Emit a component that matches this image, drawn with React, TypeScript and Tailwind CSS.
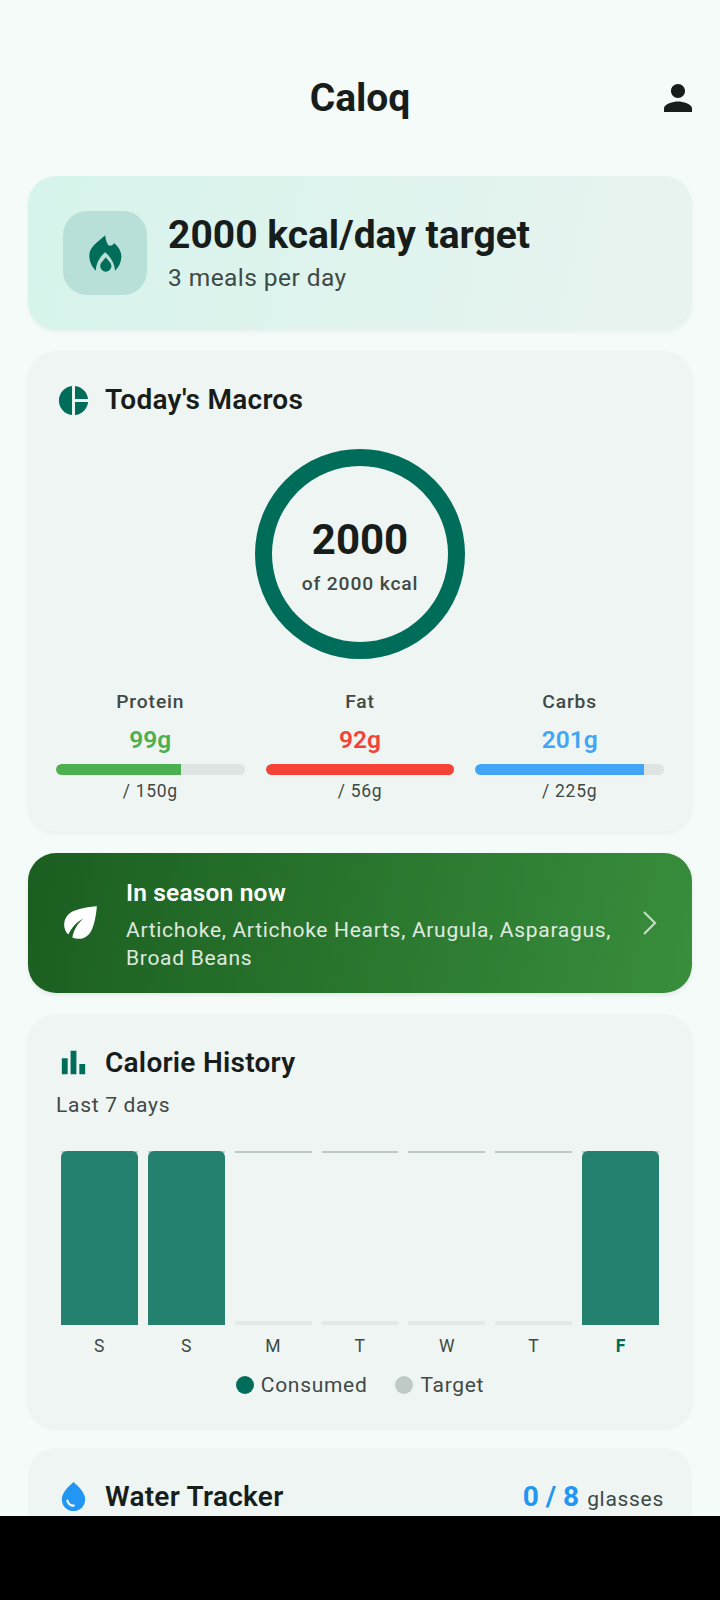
const macros = [
  { label: 'Protein', value: '99g', target: '/ 150g', pct: 66, color: 'text-[#4CAF50]', bar: 'bg-[#4CAF50]' },
  { label: 'Fat', value: '92g', target: '/ 56g', pct: 100, color: 'text-[#F44336]', bar: 'bg-[#F44336]' },
  { label: 'Carbs', value: '201g', target: '/ 225g', pct: 89.3, color: 'text-[#42A5F5]', bar: 'bg-[#42A5F5]' },
];

const days = [
  { label: 'S', full: true },
  { label: 'S', full: true },
  { label: 'M', full: false },
  { label: 'T', full: false },
  { label: 'W', full: false },
  { label: 'T', full: false },
  { label: 'F', full: true, today: true },
];

function MaterialIcon({ d, size, className }: { d: string; size: number; className: string }) {
  return (
    <svg viewBox="0 0 24 24" width={size} height={size} fill="currentColor" className={className}>
      <path d={d} />
    </svg>
  );
}

function CardTitle({ icon, title }: { icon: React.ReactNode; title: string }) {
  return (
    <div className="flex items-center gap-[14px] h-[42px]">
      {icon}
      <h2 className="text-[28px] leading-[42px] font-semibold tracking-[0.26px] text-[#171D1B]">{title}</h2>
    </div>
  );
}

export default function App() {
  return (
    <div className="w-[720px] h-[1600px] flex flex-col bg-[#F5FBF8] font-['Roboto',sans-serif] overflow-hidden">
      <div className="flex-1 min-h-0 overflow-hidden">
        <header className="mt-[70px] mb-[50px] h-[56px] px-[21px] grid grid-cols-[1fr_auto_1fr] items-center">
          <div />
          <h1 className="text-[39px] leading-[56px] font-bold text-[#171D1B]">Caloq</h1>
          <div className="flex justify-end">
            <MaterialIcon
              size={42}
              className="text-[#171D1B]"
              d="M12 12c2.21 0 4-1.79 4-4s-1.79-4-4-4-4 1.79-4 4 1.79 4 4 4zm0 2c-2.67 0-8 1.34-8 4v2h16v-2c0-2.66-5.33-4-8-4z"
            />
          </div>
        </header>

        <main className="px-[28px] flex flex-col gap-[21px]">
          {/* target */}
          <section className="h-[154px] px-[35px] flex items-center gap-[21px] rounded-[28px] bg-[linear-gradient(103deg,#D6F4EB,#E9F3F0)] shadow-[0_2px_4px_rgba(0,0,0,0.05)]">
            <div className="w-[84px] h-[84px] rounded-[24px] bg-[#B9E0D8] flex items-center justify-center">
              <svg viewBox="115 98 98 112" width="33" height="37" fill="#006D5B">
                <path d="M163 99C163 99 165 118 172 128C178 133 186 130 190 122C205 135 213 150 212 165C211 182 203 196 193 206C192 185 180 165 163 150C146 165 135 185 135 206C124 196 115 180 115 160C115 135 140 120 163 99Z" />
                <path d="M165 165C172 175 182 182 182 192A17 17 0 0 1 148 192C148 182 158 175 165 165Z" />
              </svg>
            </div>
            <div className="flex flex-col gap-[6px]">
              <div className="text-[39px] leading-[44px] font-bold text-[#171D1B]">2000 kcal/day target</div>
              <div className="text-[24.5px] leading-[30px] tracking-[0.44px] text-[#3F4946]">3 meals per day</div>
            </div>
          </section>

          {/* macros */}
          <section className="px-[28px] pt-[28px] pb-[30px] rounded-[28px] bg-[#EFF5F2] shadow-[0_2px_4px_rgba(0,0,0,0.05)]">
            <CardTitle
              title="Today's Macros"
              icon={
                <MaterialIcon
                  size={35}
                  className="text-[#006D5B]"
                  d="M11 2v20c-5.07-.5-9-4.79-9-10s3.93-9.5 9-10zm2.03 0v8.99H22c-.47-4.74-4.24-8.52-8.97-8.99zm0 11.01V22c4.74-.47 8.5-4.25 8.97-8.99h-8.97z"
                />
              }
            />
            <div className="mt-[28px] mx-auto w-[210px] h-[210px] pt-[4px] rounded-full border-[17.5px] border-[#006D5B] flex flex-col items-center justify-center">
              <div className="text-[42px] leading-[50px] font-bold text-[#171D1B]">2000</div>
              <div className="mt-[6px] text-[19.25px] leading-[26px] font-medium tracking-[0.875px] text-[#3F4946]">of 2000 kcal</div>
            </div>
            <div className="mt-[31px] grid grid-cols-3 gap-[21px]">
              {macros.map((m) => (
                <div key={m.label} className="flex flex-col items-center">
                  <div className="text-[19.25px] leading-[24px] font-medium tracking-[0.875px] text-[#3F4946]">{m.label}</div>
                  <div className={`mt-[10px] text-[24.5px] leading-[32px] font-semibold ${m.color}`}>{m.value}</div>
                  <div className="mt-[8px] w-full h-[10.5px] rounded-full bg-[#DEE4E1] overflow-hidden">
                    <div className={`h-full rounded-l-full ${m.bar}`} style={{ width: `${m.pct}%` }} />
                  </div>
                  <div className="mt-[5px] text-[17.5px] leading-[22px] tracking-[0.7px] text-[#3F4946]">{m.target}</div>
                </div>
              ))}
            </div>
          </section>

          {/* in season */}
          <section className="h-[140px] px-[28px] flex items-center gap-[21px] rounded-[28px] bg-[linear-gradient(102deg,#1B5E20,#388E3C)] shadow-[0_2px_4px_rgba(0,0,0,0.08)]">
            <MaterialIcon
              size={49}
              className="text-white shrink-0"
              d="M6.05 8.05c-2.73 2.73-2.73 7.15-.02 9.88 1.47-3.4 4.09-6.24 7.36-7.93-2.77 2.34-4.71 5.61-5.39 9.32 2.6 1.23 5.8.78 7.95-1.37C19.43 14.47 20 4 20 4S9.53 4.57 6.05 8.05z"
            />
            <div className="flex-1 pt-[3px] flex flex-col gap-[7px]">
              <div className="text-[24.5px] leading-[32px] font-semibold tracking-[0.175px] text-white">In season now</div>
              <div className="text-[21px] leading-[28px] tracking-[0.7px] text-white/85">
                Artichoke, Artichoke Hearts, Arugula, Asparagus, Broad Beans
              </div>
            </div>
            <svg width="15" height="24" viewBox="0 0 15 24" fill="none" stroke="#FFFFFF" strokeOpacity="0.7" strokeWidth="2.2" className="shrink-0 mr-[7px]">
              <path d="M2 1l11 11L2 23" />
            </svg>
          </section>

          {/* history */}
          <section className="px-[28px] pt-[28px] pb-[28px] rounded-[28px] bg-[#EFF5F2] shadow-[0_2px_4px_rgba(0,0,0,0.05)]">
            <CardTitle
              title="Calorie History"
              icon={
                <MaterialIcon
                  size={35}
                  className="text-[#006D5B]"
                  d="M4 9h4v11H4zm12 4h4v7h-4zm-6-9h4v16h-4z"
                />
              }
            />
            <div className="mt-[7px] text-[21px] leading-[28px] tracking-[0.7px] text-[#3F4946]">Last 7 days</div>
            <div className="mt-[32px] grid grid-cols-7">
              {days.map((day, i) => (
                <div key={i} className="flex flex-col items-center">
                  <div className="w-full px-[5px]">
                    <div className="relative h-[174px] flex flex-col justify-end">
                      <div className="absolute top-0 inset-x-0 h-[2px] bg-[#BFC9C5]" />
                      {day.full ? (
                        <div className="relative h-[174px] rounded-t-[6px] bg-[#24806F]" />
                      ) : (
                        <div className="h-[3.5px] bg-[#E3E9E6]" />
                      )}
                    </div>
                  </div>
                  <div
                    className={`mt-[10px] text-[17.5px] leading-[22px] ${
                      day.today ? 'font-bold text-[#006D5B]' : 'tracking-[0.4px] text-[#3F4946]'
                    }`}
                  >
                    {day.label}
                  </div>
                </div>
              ))}
            </div>
            <div className="mt-[14px] flex items-center justify-center gap-[28px] text-[21px] leading-[28px] tracking-[0.7px] text-[#3F4946]">
              <div className="flex items-center gap-[7px]">
                <span className="w-[18px] h-[18px] rounded-full bg-[#006D5B]" />
                Consumed
              </div>
              <div className="flex items-center gap-[7px]">
                <span className="w-[18px] h-[18px] rounded-full bg-[#BFC9C5]" />
                Target
              </div>
            </div>
          </section>

          {/* water */}
          <section className="px-[28px] pt-[28px] pb-[28px] rounded-[28px] bg-[#EFF5F2]">
            <div className="flex items-center justify-between">
              <CardTitle
                title="Water Tracker"
                icon={
                  <MaterialIcon
                    size={35}
                    className="text-[#2196F3]"
                    d="M12 2c-5.33 4.55-8 8.48-8 11.8 0 4.98 3.8 8.2 8 8.2s8-3.22 8-8.2c0-3.32-2.67-7.25-8-11.8zM7.83 14c.37 0 .67.26.74.62.41 2.22 2.28 2.98 3.64 2.87.43-.02.79.32.79.75 0 .4-.32.73-.72.75-2.13.13-4.62-1.09-5.19-4.12-.08-.45.28-.87.74-.87z"
                  />
                }
              />
              <div className="flex items-baseline gap-[8px]">
                <span className="text-[28px] font-bold text-[#2196F3]">0 / 8</span>
                <span className="text-[21px] tracking-[0.7px] text-[#3F4946]">glasses</span>
              </div>
            </div>
          </section>
        </main>
      </div>
      <div className="h-[84px] shrink-0 bg-black" />
    </div>
  );
}
